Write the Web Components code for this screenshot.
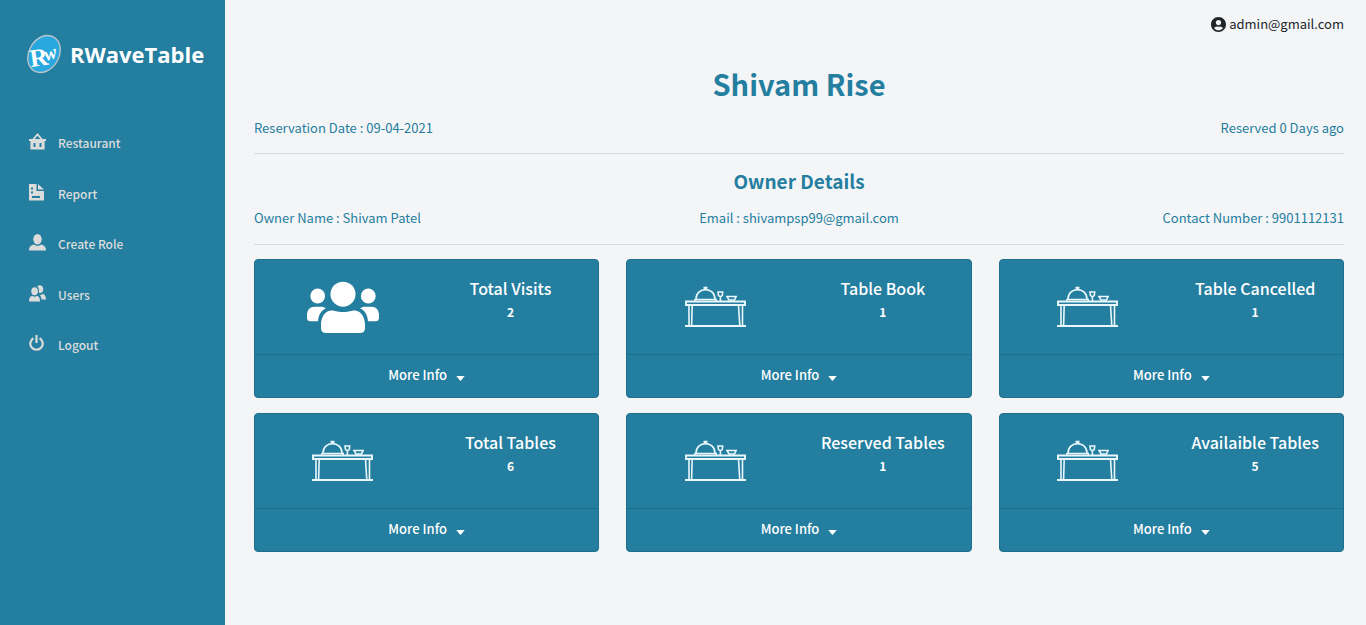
<!DOCTYPE html>
<html lang="en">
<head>
<meta charset="utf-8">
<meta name="viewport" content="width=device-width, initial-scale=1">
<title>RWaveTable</title>
<style>
  :root {
    --brand: #247e9f;
    --brand-edge: #1f6f8c;
    --page: #f4f5f7;
    --rule: #d8dadd;
  }
  html, body { height: 100%; }
  body {
    margin: 0;
    background: var(--page);
    color: #212529;
    font: 400 13px/24px "Noto Sans CJK SC", "Noto Sans", sans-serif;
  }
</style>
</head>
<body>
<rw-app>
  <rw-sidebar slot="side">
    <rw-nav-item icon="home">Restaurant</rw-nav-item>
    <rw-nav-item icon="report">Report</rw-nav-item>
    <rw-nav-item icon="role">Create Role</rw-nav-item>
    <rw-nav-item icon="users">Users</rw-nav-item>
    <rw-nav-item icon="logout">Logout</rw-nav-item>
  </rw-sidebar>
  <rw-topbar>admin@gmail.com</rw-topbar>
  <rw-section>
    <span slot="title">Shivam Rise</span>
    <span>Reservation Date : 09-04-2021</span>
    <span>Reserved 0 Days ago</span>
  </rw-section>
  <rw-section minor>
    <span slot="title">Owner Details</span>
    <span>Owner Name : Shivam Patel</span>
    <span>Email : shivampsp99@gmail.com</span>
    <span>Contact Number : 9901112131</span>
  </rw-section>
  <rw-cards>
    <rw-card icon="people" value="2">Total Visits</rw-card>
    <rw-card icon="table" value="1">Table Book</rw-card>
    <rw-card icon="table" value="1">Table Cancelled</rw-card>
    <rw-card icon="table" value="6">Total Tables</rw-card>
    <rw-card icon="table" value="1">Reserved Tables</rw-card>
    <rw-card icon="table" value="5">Availaible Tables</rw-card>
  </rw-cards>
</rw-app>

<script>
const icons = {
  home: `<svg width="17" height="17" viewBox="0 0 17 17" fill="currentColor" aria-hidden="true"><path fill-rule="evenodd" d="M8.500 0 L13.600 6 H17 V8 H15.600 V16.500 H1.400 V8 H0 V6 H3.400 Z M8.500 2.800 L5.600 6 H11.400 Z M4.500 10 V14 H6.500 V10 Z M10.500 10 V14 H12.500 V10 Z"/></svg>`,
  report: `<svg width="17" height="17" viewBox="0 0 17 17" fill="currentColor" aria-hidden="true"><path fill-rule="evenodd" d="M0 0 H7.500 V7 H15 V16.500 H0 Z M2 3.500 V5.500 H4 V3.500 Z M2 7.500 V9.500 H4 V7.500 Z M3 12 V14 H11 V12 Z"/><path d="M9 0 L15 5.500 H9 Z"/></svg>`,
  role: `<svg width="17" height="17" viewBox="0 0 17 17" fill="currentColor" aria-hidden="true"><ellipse cx="8.500" cy="5.200" rx="4.200" ry="5.200"/><path d="M0 16.500 C0 13 1.500 11.200 5 10.500 Q8.500 13.300 12 10.500 C15.500 11.200 17 13 17 16.500 Z"/></svg>`,
  users: `<svg width="17" height="17" viewBox="0 0 17 17" fill="currentColor" aria-hidden="true"><ellipse cx="5.600" cy="6.200" rx="3.300" ry="4"/><path d="M0 16.500 C0 13 1 11.400 3.200 10.800 Q5.600 12.800 8 10.800 C10 11.400 11 13 11 16.500 Z"/><path d="M8.300 1.200 C10.500 -.8 14.300 .3 14.300 4 C14.300 6.600 12.600 8.200 10.800 8 C10.200 7.900 9.900 7.600 9.700 7.200 C10.200 5 9.800 2.800 8.300 1.200 Z"/><path d="M10.300 9.800 Q12.300 10.600 13.600 8.800 C16 9.500 17 11.500 17 14.500 H12.500 C12.300 12.300 11.700 10.800 10.300 9.800 Z"/></svg>`,
  logout: `<svg width="17" height="17" viewBox="0 0 17 17" fill="none" stroke="currentColor" stroke-width="2.200" aria-hidden="true"><path d="M4.400 3.200 A6.200 6.200 0 1 0 10.600 3.200"/><path d="M7.500 0 V8"/></svg>`,
  account: `<svg width="15" height="15" viewBox="0 0 496 496" fill="currentColor" aria-hidden="true"><path d="M248 0C111 0 0 111 0 248s111 248 248 248 248-111 248-248S385 0 248 0zm0 96c48.600 0 88 39.400 88 88s-39.400 88-88 88-88-39.400-88-88 39.400-88 88-88zm0 344c-58.700 0-111.300-26.600-146.500-68.200 18.800-35.400 55.600-59.800 98.500-59.800 2.400 0 4.800.4 7.100 1.100 13 4.200 26.600 6.900 40.900 6.900s28-2.700 40.900-6.900c2.300-.7 4.700-1.100 7.100-1.100 42.900 0 79.700 24.400 98.500 59.800C359.300 413.400 306.700 440 248 440z"/></svg>`,
  people: `<svg width="72" height="52" viewBox="0 0 72 52" fill="#fff" aria-hidden="true"><circle cx="36" cy="13.200" r="12.500"/><circle cx="10.700" cy="15" r="7.400"/><circle cx="61.300" cy="15" r="7.400"/><path d="M24 29.500 C27 29 29 31 36 31 C43 31 45 29 48 29.500 C54 30 58 36 58 44 V47 Q58 52 53 52 H19 Q14 52 14 47 V44 C14 36 18 30 24 29.500 Z"/><path d="M19 27.300 C14 29.500 11.500 34 11 40.300 H3.500 Q0 40.300 0 36.800 V34 C0 29 3 25.700 7.500 25.700 H14 C16 25.700 17.500 26.200 19 27.300 Z"/><path d="M53 27.300 C58 29.500 60.500 34 61 40.300 H68.500 Q72 40.300 72 36.800 V34 C72 29 69 25.700 64.500 25.700 H58 C56 25.700 54.500 26.200 53 27.300 Z"/></svg>`,
  table: `<svg width="61" height="42" viewBox="0 0 61 42" fill="none" stroke="#eaf7fc" stroke-width="1.600" aria-hidden="true"><path stroke-width="2" d="M20.500 1 V4 M18.500 1.800 H22.500"/><path d="M11 13 C11.500 .5 29.500 .5 30 13 M9.800 13.500 H31.200 V15.500"/><path stroke-width="1.300" d="M9.800 13 V16"/><path d="M33 6 H37.700 L37.300 9.500 Q35.400 11.500 33.500 9.500 Z M35.400 11 V15"/><path d="M41 10.500 H52 M42.300 10.500 L43.800 14 H49.500 L51 10.500"/><path stroke-width="1.900" d="M1 15.500 H60 V19 H1 Z"/><path d="M4 19 V40 M7.200 19 L6.600 40 M53.500 19 L54.800 40 M57.500 19 V40"/><path stroke-width="2" d="M0 40 H61"/></svg>`,
  caret: `<svg width="9" height="5" viewBox="0 0 9 5" fill="currentColor" aria-hidden="true"><path d="M.3 0 H8.700 L5 4.600 Q4.500 5 4 4.600 Z"/></svg>`
};

class Base extends HTMLElement {
  connectedCallback() {
    if (this.shadowRoot) return;
    this.attachShadow({ mode: "open" }).innerHTML = this.render();
  }
}

customElements.define("rw-app", class extends Base {
  render() {
    return `<style>
      :host { display: grid; grid-template-columns: 225px minmax(0, 1fr); min-height: 100%; }
      main { padding: 12px 22px 24px 29px; }
    </style>
    <slot name="side"></slot>
    <main><slot></slot></main>`;
  }
});

customElements.define("rw-logo", class extends Base {
  render() {
    return `<style>
      :host { display: block; }
      a { display: flex; align-items: center; gap: 8px; color: #fff; text-decoration: none; font: 700 22px/40px "Open Sans", sans-serif; }
      svg { flex: none; }
      text { fill: #fff; font-weight: 700; }
      .r { font-family: "Liberation Serif", serif; font-size: 25px; }
      .w { font-family: "Liberation Serif", serif; font-size: 19px; font-style: italic; }
    </style>
    <a href="#"><svg width="36" height="40" viewBox="0 0 36 40" aria-hidden="true">
      <ellipse cx="18" cy="20" rx="15" ry="19.500" transform="rotate(30 18 20)" fill="#29a8e0" stroke="#b9c4ca" stroke-width="1.400"/>
      <text class="r" x="5" y="33" transform="rotate(-8 5 33)">R</text>
      <text class="w" x="20" y="27" transform="rotate(-18 20 27)">w</text>
    </svg><span>RWaveTable</span></a>`;
  }
});

customElements.define("rw-sidebar", class extends Base {
  render() {
    return `<style>
      :host { display: block; background: var(--brand); padding: 34px 20px 24px 26px; }
      nav { display: flex; flex-direction: column; justify-content: space-between; height: 226px; margin-top: 57px; padding-left: 3px; }
    </style>
    <rw-logo></rw-logo>
    <nav aria-label="Main"><slot></slot></nav>`;
  }
});

customElements.define("rw-nav-item", class extends Base {
  render() {
    return `<style>
      :host { display: block; }
      a { display: flex; gap: 12px; color: #dcdcdc; text-decoration: none; font-size: 12px; font-weight: 500; line-height: 24px; }
      svg { flex: none; margin-top: 2px; }
    </style>
    <a href="#">${icons[this.getAttribute("icon")]}<span><slot></slot></span></a>`;
  }
});

customElements.define("rw-topbar", class extends Base {
  render() {
    return `<style>
      :host { display: flex; justify-content: flex-end; }
      a { display: flex; align-items: center; gap: 3px; color: #212529; text-decoration: none; }
    </style>
    <a href="#">${icons.account}<span><slot></slot></span></a>`;
  }
});

customElements.define("rw-section", class extends Base {
  render() {
    const tag = this.hasAttribute("minor") ? "h2" : "h1";
    return `<style>
      :host { display: block; color: var(--brand); border-bottom: 1px solid var(--rule); padding-bottom: 13px; }
      :host([minor]) { padding-bottom: 14px; }
      h1, h2 { margin: 0; text-align: center; font-weight: 700; }
      h1 { padding: 27px 0 13px; font-size: 29px; line-height: 40px; }
      h2 { padding: 12px 0 10px; font-size: 19px; line-height: 30px; }
      div { display: flex; }
      ::slotted(span:not([slot])) { flex: 1; text-align: center; }
      ::slotted(span:not([slot]):nth-child(2)) { text-align: left; }
      ::slotted(span:last-child) { text-align: right !important; }
    </style>
    <${tag}><slot name="title"></slot></${tag}>
    <div><slot></slot></div>`;
  }
});

customElements.define("rw-cards", class extends Base {
  render() {
    return `<style>
      :host { display: grid; grid-template-columns: repeat(3, minmax(0, 1fr)); gap: 15px 27px; margin-top: 14px; }
    </style><slot></slot>`;
  }
});

customElements.define("rw-card", class extends Base {
  render() {
    return `<style>
      :host { display: block; box-sizing: border-box; background: var(--brand); border: 1px solid var(--brand-edge); border-radius: 4px; color: #fff; }
      .body { display: grid; grid-template-columns: 1fr 1fr; min-height: 94px; padding: 0 4px; }
      .icon { display: grid; place-items: center; }
      .text { padding-top: 16px; text-align: center; }
      h3 { margin: 0; font-size: 16px; font-weight: 500; line-height: 24px; }
      p { margin: 0; font-size: 12px; font-weight: 700; line-height: 24px; }
      button { display: flex; align-items: center; justify-content: center; gap: 9px; box-sizing: border-box; width: 100%; height: 43px; margin: 0; padding: 0 0 2px; border: 0; border-top: 1px solid var(--brand-edge); background: none; color: inherit; font: inherit; font-weight: 500; cursor: pointer; }
      button svg { margin-top: 6px; }
    </style>
    <div class="body">
      <div class="icon">${icons[this.getAttribute("icon")]}</div>
      <div class="text"><h3><slot></slot></h3><p>${this.getAttribute("value")}</p></div>
    </div>
    <button type="button"><span>More Info</span>${icons.caret}</button>`;
  }
});
</script>
</body>
</html>
